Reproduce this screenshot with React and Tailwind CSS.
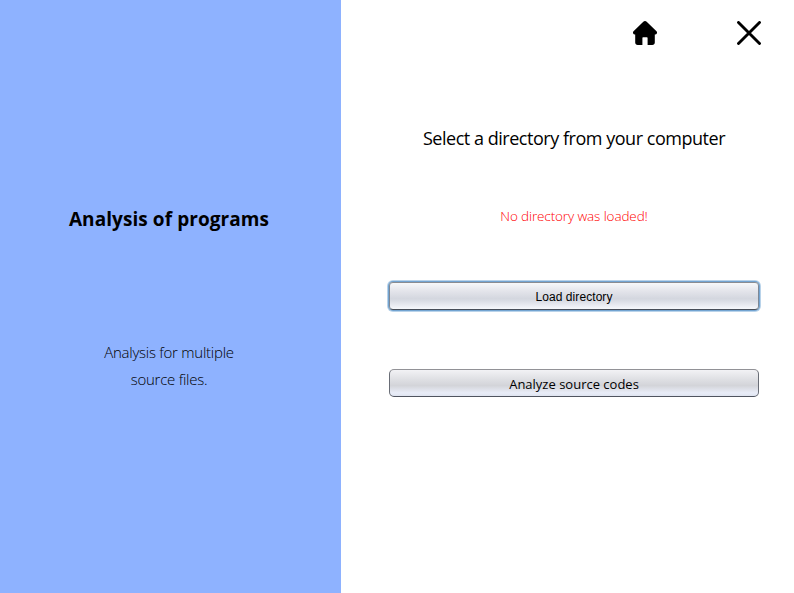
const gradient =
  "bg-[linear-gradient(to_bottom,#f7f8fa_0%,#e3e4ea_32%,#d4d7df_60%,#d8dbe3_67%,#f6f8fc_100%)]";
const gradientIdle =
  "bg-[linear-gradient(to_bottom,#f2f2f5_0%,#dfe0e4_35%,#d3d4d9_60%,#e9edf8_88%,#dfe4f0_100%)]";

function HomeIcon() {
  return (
    <svg width="24" height="24" viewBox="0 0 24 24" aria-label="Home">
      <path d="M12 0c.7 0 1.200.3 1.700.8l9.800 9.500c.7.7.6 1.600.3 2.300-.3.600-.8.900-1.600.900h-.400V21.500c0 1.500-1 2.500-2.500 2.500H14.600V17.300c0-.6-.3-1-1-1h-3.200c-.7 0-1 .4-1 1V24H4.700c-1.500 0-2.500-1-2.500-2.500V13.500h-.400c-.8 0-1.300-.3-1.600-.9-.3-.7-.4-1.600.3-2.300l9.800-9.500c.5-.5 1-.8 1.700-.8z" />
    </svg>
  );
}

function CloseIcon() {
  return (
    <svg width="24" height="24" viewBox="0 0 24 24" stroke="#000" strokeWidth="2.900" strokeLinecap="round" aria-label="Close">
      <path d="M1.500 1.500l21 21M22.500 1.500L1.500 22.500" />
    </svg>
  );
}

export default function App() {
  return (
    <div className="flex h-[593px] w-[794px] overflow-hidden bg-white font-['Open_Sans',sans-serif] text-black">
      <aside className="flex w-[341px] shrink-0 flex-col items-center bg-[#8eb2ff] pt-[205px] pr-[3px]">
        <h1 className="h-7 whitespace-nowrap text-[19px] leading-7 font-bold tracking-[0.07px]">Analysis of programs</h1>
        <p className="mt-[106px] text-center text-[15px] leading-[27px] font-light tracking-[-0.25px]">
          Analysis for multiple
          <br />
          source files.
        </p>
      </aside>
      <main className="flex flex-1 flex-col pr-[35px] pl-12">
        <header className="flex h-[45px] items-end justify-end gap-20">
          <button className="h-6 w-6"><HomeIcon /></button>
          <button className="-mr-[2px] h-6 w-6"><CloseIcon /></button>
        </header>
        <h2 className="mt-[79px] h-7 text-center whitespace-nowrap text-[18px] leading-7 tracking-[-0.47px]">Select a directory from your computer</h2>
        <p className="mt-[54px] h-5 text-center text-[13.500px] leading-5 font-light tracking-[-0.12px] text-[#ff0000]">No directory was loaded!</p>
        <button className={`mt-14 h-7 rounded-[4px] border border-t-[#8a8c91] border-r-[#7d8896] border-b-[#474d58] border-l-[#7d8896] font-['Liberation_Sans',sans-serif] text-[12px] leading-7 tracking-[0.07px] shadow-[0_0_0_1px_#73a4d1,0_0_0_2px_#b9d3ea] ${gradient}`}>
          Load directory
        </button>
        <button className={`mt-[59px] h-7 rounded-[5px] border border-t-[#929297] border-r-[#696d76] border-b-[#505560] border-l-[#696d76] text-[13px] leading-7 ${gradientIdle}`}>
          Analyze source codes
        </button>
      </main>
    </div>
  );
}
